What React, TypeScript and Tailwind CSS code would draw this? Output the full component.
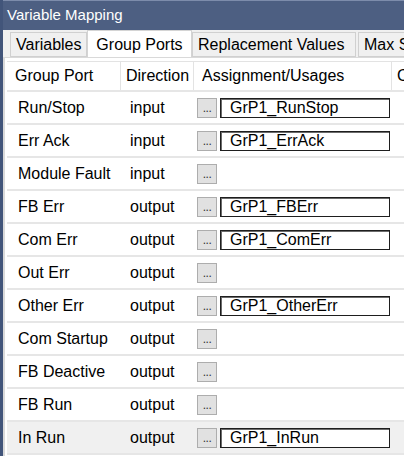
import React from 'react';

type Port = {
  name: string;
  direction: string;
  assignment?: string;
};

const ports: Port[] = [
  { name: 'Run/Stop', direction: 'input', assignment: 'GrP1_RunStop' },
  { name: 'Err Ack', direction: 'input', assignment: 'GrP1_ErrAck' },
  { name: 'Module Fault', direction: 'input' },
  { name: 'FB Err', direction: 'output', assignment: 'GrP1_FBErr' },
  { name: 'Com Err', direction: 'output', assignment: 'GrP1_ComErr' },
  { name: 'Out Err', direction: 'output' },
  { name: 'Other Err', direction: 'output', assignment: 'GrP1_OtherErr' },
  { name: 'Com Startup', direction: 'output' },
  { name: 'FB Deactive', direction: 'output' },
  { name: 'FB Run', direction: 'output' },
  { name: 'In Run', direction: 'output', assignment: 'GrP1_InRun' },
];

function Tab({ label, width, active }: { label: string; width: string; active?: boolean }) {
  if (active) {
    return (
      <div
        className={`${width} h-[28px] shrink-0 bg-white border border-b-0 border-[#d4d4d4] flex items-center justify-center relative z-10 -mb-px`}
      >
        {label}
      </div>
    );
  }
  return (
    <div
      className={`${width} h-[25px] mt-[2px] shrink-0 bg-[#f0f0f0] border border-[#d0d0d0] flex items-center pl-[5px] whitespace-nowrap`}
    >
      {label}
    </div>
  );
}

function EllipsisButton() {
  return (
    <div className="w-[20px] h-[20px] shrink-0 bg-[#e1e1e1] border border-[#adadad] flex items-end justify-center pb-[3px] text-[12px] leading-none tracking-[-0.5px] text-[#333]">
      ...
    </div>
  );
}

export default function App() {
  return (
    <div
      className="w-[404px] h-[456px] flex overflow-hidden bg-[#f0f0f0] text-black"
      style={{ fontFamily: '"Liberation Sans", Arial, sans-serif' }}
    >
      {/* Left window edge */}
      <div className="w-[3px] shrink-0 bg-[#42557a]" />

      <div className="flex-1 flex flex-col min-w-0">
        {/* Title bar */}
        <div className="h-[30px] shrink-0 bg-[#4d5f82] border-t border-[#7d8cab] flex items-center pl-[4px] text-[15px] text-white">
          Variable Mapping
        </div>

        {/* Tabs */}
        <div className="h-[27px] shrink-0 flex items-start pl-[7px] text-[16px] overflow-hidden">
          <Tab label="Variables" width="w-[77px]" />
          <Tab label="Group Ports" width="w-[105px]" active />
          <Tab label="Replacement Values" width="w-[164px]" />
          <div className="w-[2px] shrink-0" />
          <Tab label="Max Sizes" width="w-[80px]" />
        </div>

        {/* Panel */}
        <div className="flex-1 bg-white border-t border-l-2 border-[#d9d9d9] pt-[3px] pl-[2px] min-h-0 overflow-hidden text-[16px]">
          {/* Header */}
          <div className="h-[31px] flex border-t border-[#e3e3e3] border-b-2 border-b-[#e6e6e6]">
            <div className="w-[114px] shrink-0 flex items-center pl-[8px] border-r border-[#e3e3e3]">
              Group Port
            </div>
            <div className="w-[73px] shrink-0 flex items-center pl-[5px] border-r border-[#e3e3e3]">
              Direction
            </div>
            <div className="w-[198px] shrink-0 flex items-center pl-[8px] border-r border-[#e3e3e3]">
              Assignment/Usages
            </div>
            <div className="flex-1 flex items-center pl-[5px] whitespace-nowrap">Comment</div>
          </div>

          {/* Rows */}
          {ports.map((p, i) => (
            <div
              key={p.name}
              className={`h-[33px] flex items-center border-b-2 border-[#e6e6e6] ${
                i === ports.length - 1 ? 'bg-[#f0f0f0]' : 'bg-white'
              }`}
            >
              <div className="w-[114px] shrink-0 pl-[11px] whitespace-nowrap">{p.name}</div>
              <div className="w-[73px] shrink-0 pl-[9px]">{p.direction}</div>
              <div className="w-[198px] shrink-0 flex items-center gap-[3px] pl-[3px]">
                <EllipsisButton />
                {p.assignment && (
                  <div className="w-[170px] h-[20px] border border-[#1e1e1e] shadow-[inset_1px_1px_0_#6b6b6b] bg-white flex items-center pl-[9px] whitespace-nowrap">
                    {p.assignment}
                  </div>
                )}
              </div>
            </div>
          ))}
        </div>
      </div>
    </div>
  );
}
